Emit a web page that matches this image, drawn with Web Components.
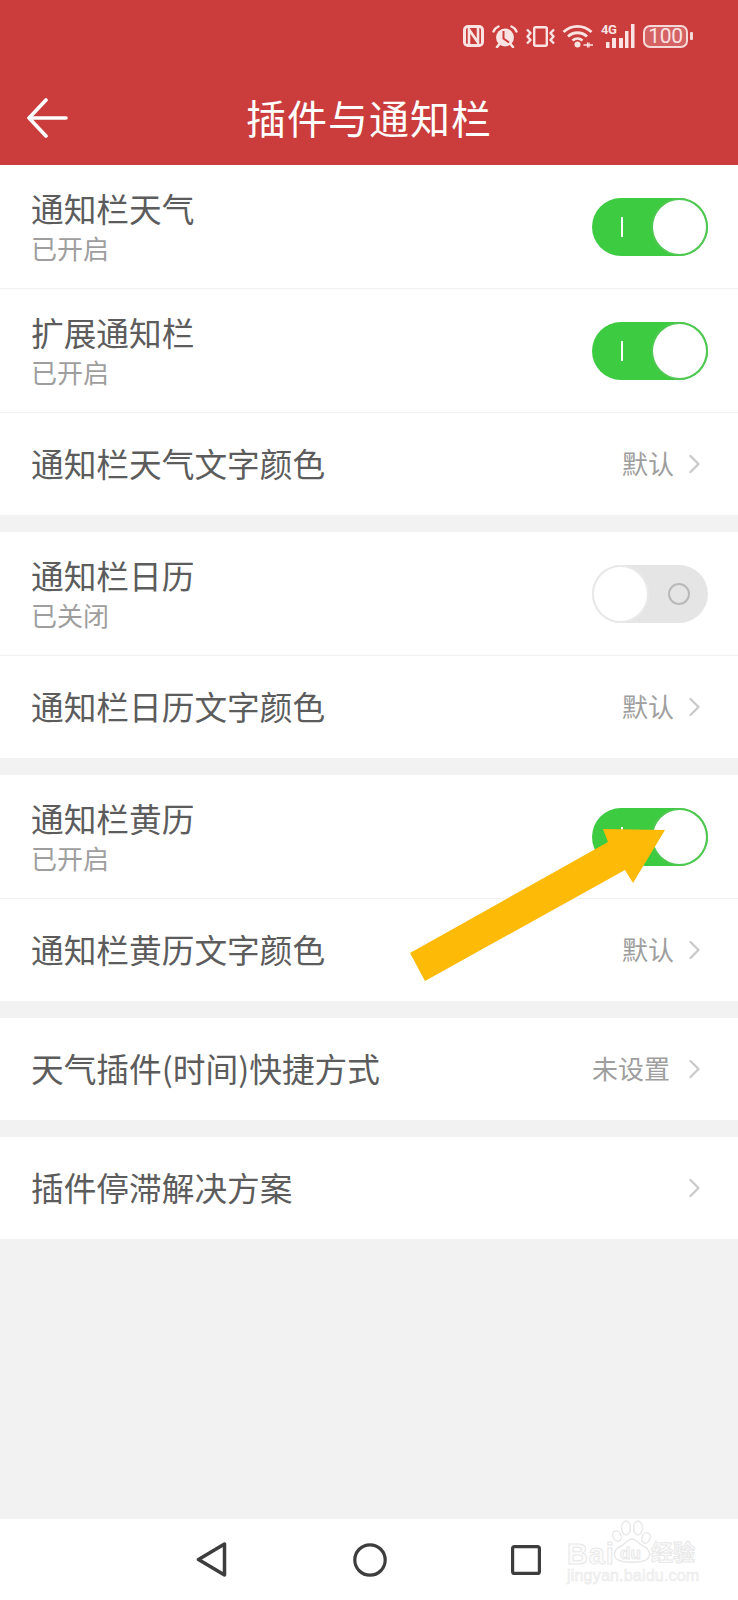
<!DOCTYPE html>
<html lang="zh">
<head>
<meta charset="utf-8">
<title>插件与通知栏</title>
<style>
  html, body { margin: 0; padding: 0; }
  body { width: 738px; height: 1600px; overflow: hidden; font-family: "Noto Sans CJK SC", "Noto Sans", sans-serif; }
</style>
</head>
<body>
<app-screen>
  <status-bar slot="top"></status-bar>
  <app-bar slot="top">插件与通知栏</app-bar>

  <setting-group>
    <setting-row>通知栏天气<span slot="sub">已开启</span><toggle-switch slot="control" on></toggle-switch></setting-row>
    <setting-row>扩展通知栏<span slot="sub">已开启</span><toggle-switch slot="control" on></toggle-switch></setting-row>
    <setting-row value="默认" last>通知栏天气文字颜色</setting-row>
  </setting-group>
  <setting-group>
    <setting-row>通知栏日历<span slot="sub">已关闭</span><toggle-switch slot="control"></toggle-switch></setting-row>
    <setting-row value="默认" last>通知栏日历文字颜色</setting-row>
  </setting-group>
  <setting-group>
    <setting-row>通知栏黄历<span slot="sub">已开启</span><toggle-switch slot="control" on></toggle-switch></setting-row>
    <setting-row value="默认" last>通知栏黄历文字颜色</setting-row>
  </setting-group>
  <setting-group>
    <setting-row value="未设置" last style="--value-gap: 19px">天气插件(时间)快捷方式</setting-row>
  </setting-group>
  <setting-group>
    <setting-row value="" last>插件停滞解决方案</setting-row>
  </setting-group>

  <nav-bar slot="bottom"></nav-bar>
  <arrow-mark slot="over"></arrow-mark>
</app-screen>

<script>
class AppScreen extends HTMLElement {
  constructor() {
    super();
    this.attachShadow({ mode: "open" });
    this.shadowRoot.innerHTML = `
    <style>
      :host { display: flex; flex-direction: column; position: relative; width: 738px; height: 1600px; background: #f2f2f2; }
      header { background: #cb3d3d; border-bottom: 1px solid #ee9c98; box-sizing: border-box; height: 166px; }
      main { flex: 1; display: flex; flex-direction: column; gap: 17px; margin-top: -1px; }
    </style>
    <header><slot name="top"></slot></header>
    <main><slot></slot></main>
    <slot name="bottom"></slot>
    <slot name="over"></slot>`;
  }
}

class StatusBar extends HTMLElement {
  constructor() {
    super();
    this.attachShadow({ mode: "open" });
    this.shadowRoot.innerHTML = `
    <style>
      :host { display: flex; align-items: center; justify-content: flex-end; height: 70px; padding: 2px 45px 0 0; box-sizing: border-box; color: #f9e4e3; }
      svg { display: block; flex: none; }
      .nfc, .alarm { margin-right: 8px; }
      .vib, .wifi { margin-right: 7px; }
      .signal { position: relative; width: 34px; height: 24px; margin-right: 8px; }
      .signal span { position: absolute; left: 0; top: -1px; font: 700 13px/13px "Roboto", sans-serif; letter-spacing: -.4px; }
      .signal svg { position: absolute; left: 0; top: 0; }
      .battery { display: flex; align-items: center; }
      .cell { width: 45px; height: 23px; box-sizing: border-box; border: 2.5px solid #f5d9d8; border-radius: 7px; background: rgba(255,255,255,.2);
        display: flex; align-items: center; justify-content: center; font: 400 21px/18px "Roboto", sans-serif; letter-spacing: -.3px; }
      .tip { width: 3px; height: 8px; margin-left: 2px; background: #f5d9d8; border-radius: 1px; }
    </style>
    <svg class="nfc" width="21" height="22" viewBox="0 0 21 22" fill="none">
      <rect x="0" y="0" width="21" height="22" rx="5" fill="currentColor"/>
      <rect x="3" y="3" width="15" height="16" rx="1.500" fill="#cb3d3d"/>
      <path d="M6 19V4.500L15 17.500V3" stroke="currentColor" stroke-width="2.600"/>
    </svg>
    <svg class="alarm" width="26" height="23" viewBox="0 0 26 23" fill="none" stroke="currentColor">
      <circle cx="13" cy="12.500" r="9" fill="currentColor" stroke="none"/>
      <path d="M11.500 6V13.500L17 17.500" stroke="#cb3d3d" stroke-width="2"/>
      <path d="M1.500 6.500C2.500 4 4 2.500 6.500 1.500M24.500 6.500C23.500 4 22 2.500 19.500 1.500" stroke-width="2.400" stroke-linecap="round"/>
      <path d="M5 22L7.500 19M21 22L18.500 19" stroke-width="2.600" stroke-linecap="round"/>
    </svg>
    <svg class="vib" width="29" height="21" viewBox="0 0 29 21" fill="none" stroke="currentColor" stroke-width="2.400">
      <rect x="8.200" y="1.200" width="12.600" height="18.600" rx="1.500"/>
      <path d="M1 3.500L4.500 7L1.500 10.500L4.500 14L1 17.500" stroke-linejoin="round"/>
      <path d="M28 3.500L24.500 7L27.500 10.500L24.500 14L28 17.500" stroke-linejoin="round"/>
    </svg>
    <svg class="wifi" width="32" height="24" viewBox="0 0 32 24" fill="none" stroke="currentColor" stroke-width="2.800">
      <path d="M1.500 8C9.500 .5 21.500 .5 29.500 8"/>
      <path d="M6 12.500C11.500 7.500 19.500 7.500 25 12.500"/>
      <path d="M10.500 16.500C13.500 14 17.500 14 20.500 16.500"/>
      <circle cx="15.500" cy="20.500" r="3" fill="currentColor" stroke="none"/>
      <path d="M21.500 21H31" stroke-width="1.500"/>
      <path d="M25.500 18.500V23.500M27 18.500V23.500" stroke-width="1.200"/>
    </svg>
    <div class="signal">
      <span>4G</span>
      <svg width="34" height="24" viewBox="0 0 34 24" fill="currentColor">
        <rect x="5" y="18" width="3.500" height="6"/><rect x="11" y="14" width="4" height="10"/>
        <rect x="18" y="14" width="4" height="10"/><rect x="24" y="7" width="3.500" height="17"/>
        <rect x="30" y="0" width="3.500" height="24"/>
      </svg>
    </div>
    <div class="battery"><div class="cell">100</div><div class="tip"></div></div>`;
  }
}

class AppBar extends HTMLElement {
  constructor() {
    super();
    this.attachShadow({ mode: "open" });
    this.shadowRoot.innerHTML = `
    <style>
      :host { display: flex; align-items: center; justify-content: center; position: relative; height: 95px; color: #fff; font-size: 40px; letter-spacing: 1px; line-height: 60px; padding-bottom: 2px; box-sizing: border-box; }
      svg { position: absolute; left: 26px; top: 28px; }
    </style>
    <svg width="42" height="40" viewBox="0 0 42 40" fill="none" stroke="#fff" stroke-width="3.600" stroke-linecap="round" stroke-linejoin="round">
      <path d="M20 2L3 20L20 38M3 20H40"/>
    </svg>
    <slot></slot>`;
  }
}

class SettingGroup extends HTMLElement {
  constructor() {
    super();
    this.attachShadow({ mode: "open" });
    this.shadowRoot.innerHTML = `
    <style>
      :host { display: block; background: #fff; }
    </style>
    <slot></slot>`;
  }
}

class SettingRow extends HTMLElement {
  connectedCallback() {
    if (this.shadowRoot) return;
    this.attachShadow({ mode: "open" });
    const hasValue = this.hasAttribute("value");
    const value = this.getAttribute("value") || "";
    this.shadowRoot.innerHTML = `
    <style>
      :host { display: flex; align-items: center; box-sizing: border-box; height: 124px; padding: 0 30px 0 31px; border-bottom: 1px solid #f1f1f1; }
      :host([last]) { height: 102px; border-bottom: none; }
      .text { flex: 1; display: flex; flex-direction: column; padding-bottom: 1px; color: #5c5c5c; font-size: 32.700px; line-height: 44px; }
      :host([last]) .text { padding-bottom: 3px; }
      ::slotted([slot="sub"]) { color: #9e9e9e; font-size: 26px; line-height: 36px; }
      .value { color: #9e9e9e; font-size: 26px; margin-right: var(--value-gap, 15px); padding-bottom: 4px; }
      svg { display: block; }
    </style>
    <div class="text"><slot></slot><slot name="sub"></slot></div>
    <span class="value">${value}</span>
    <slot name="control"></slot>
    ${hasValue ? `<svg width="11" height="20" viewBox="0 0 11 20" fill="none" stroke="#c8c8c8" stroke-width="2.200" stroke-linecap="round" stroke-linejoin="round"><path d="M1.500 2L9.500 10L1.500 18"/></svg><span style="width:8px"></span>` : ""}`;
  }
}

class ToggleSwitch extends HTMLElement {
  connectedCallback() {
    if (this.shadowRoot) return;
    this.attachShadow({ mode: "open" });
    this.shadowRoot.innerHTML = `
    <style>
      :host { display: flex; align-items: center; position: relative; box-sizing: border-box; width: 116px; height: 58px; border-radius: 29px; background: #e5e5e5; }
      :host([on]) { background: #3dcb41; justify-content: flex-end; }
      .knob { box-sizing: border-box; width: 57px; height: 58px; border-radius: 50%; background: #fff; border: 2px solid #e9e9e9; }
      :host([on]) .knob { border-color: #4ec850; }
      .mark { position: absolute; }
      :host([on]) .mark { left: 29px; top: 19px; width: 2px; height: 20px; background: #fff; }
      :host(:not([on])) .mark { right: 18px; top: 18px; width: 22px; height: 22px; box-sizing: border-box; border: 2px solid #b9b9b9; border-radius: 50%; }
    </style>
    <span class="mark"></span>
    <span class="knob"></span>`;
  }
}

class NavBar extends HTMLElement {
  constructor() {
    super();
    this.attachShadow({ mode: "open" });
    this.shadowRoot.innerHTML = `
    <style>
      :host { display: flex; align-items: center; position: relative; height: 81px; background: #fff; padding-left: 196px; box-sizing: border-box; }
      svg { display: block; flex: none; }
      .home { margin-left: 126px; }
      .recent { margin-left: 124px; }
      .mark { position: absolute; left: 564px; top: 0; width: 140px; height: 81px; }
      .bai, .jy, .cn, .du { position: absolute; white-space: nowrap; color: #fcfcfc; -webkit-text-stroke: 1px #e8e8e8; }
      .bai { left: 3px; top: 17px; font: 700 29px/36px "Liberation Sans", sans-serif; letter-spacing: .8px; }
      .du { left: 56px; top: 23px; font: 700 17px/24px "Liberation Sans", sans-serif; }
      .cn { left: 87px; top: 16px; font: 700 22px/30px "Noto Sans CJK SC", sans-serif; }
      .jy { left: 3px; top: 47px; font: 400 16px/20px "Liberation Sans", sans-serif; letter-spacing: .2px; color: #f6f6f6; -webkit-text-stroke: .5px #e8e8e8; }
      .paw { position: absolute; left: 47px; top: 0; }
    </style>
    <svg width="31" height="35" viewBox="0 0 31 35" fill="none" stroke="#3d3d3d" stroke-width="3.500" stroke-linejoin="round"><path d="M2.500 17.500L28.500 2V33Z"/></svg>
    <svg class="home" width="34" height="34" viewBox="0 0 34 34" fill="none" stroke="#3d3d3d" stroke-width="3.200"><circle cx="17" cy="17" r="15.200"/></svg>
    <svg class="recent" width="30" height="30" viewBox="0 0 30 30" fill="none" stroke="#3d3d3d" stroke-width="3.200"><rect x="1.600" y="1.600" width="26.800" height="26.800" rx="2"/></svg>
    <div class="mark">
      <svg class="paw" width="42" height="44" viewBox="0 0 42 44" fill="#fff" stroke="#e8e8e8" stroke-width="1.400">
        <ellipse cx="6" cy="17" rx="4" ry="5.500" transform="rotate(-25 6 17)"/><ellipse cx="15" cy="9" rx="4.500" ry="7"/><ellipse cx="27" cy="9" rx="4.500" ry="7"/><ellipse cx="35" cy="19" rx="4" ry="5.500" transform="rotate(25 35 19)"/>
        <path d="M7 41C1 37 3 30 10 27C14 25 17 20 21 20C25 20 28 25 32 27C39 30 41 37 35 41C28 44 14 44 7 41Z"/>
      </svg>
      <span class="bai">Bai</span><span class="du">du</span><span class="cn">经验</span>
      <span class="jy">jingyan.baidu.com</span>
    </div>`;
  }
}

class ArrowMark extends HTMLElement {
  constructor() {
    super();
    this.attachShadow({ mode: "open" });
    this.shadowRoot.innerHTML = `
    <style>
      :host { position: absolute; left: 403px; top: 822px; width: 270px; height: 165px; pointer-events: none; }
      svg { display: block; }
    </style>
    <svg width="270" height="165" viewBox="403 822 270 165">
      <polygon fill="#fdba07" points="410,953 608,842 603,829 665,830 633,883 625,870 425,981"/>
    </svg>`;
  }
}

customElements.define("app-screen", AppScreen);
customElements.define("status-bar", StatusBar);
customElements.define("app-bar", AppBar);
customElements.define("setting-group", SettingGroup);
customElements.define("setting-row", SettingRow);
customElements.define("toggle-switch", ToggleSwitch);
customElements.define("nav-bar", NavBar);
customElements.define("arrow-mark", ArrowMark);
</script>
</body>
</html>
